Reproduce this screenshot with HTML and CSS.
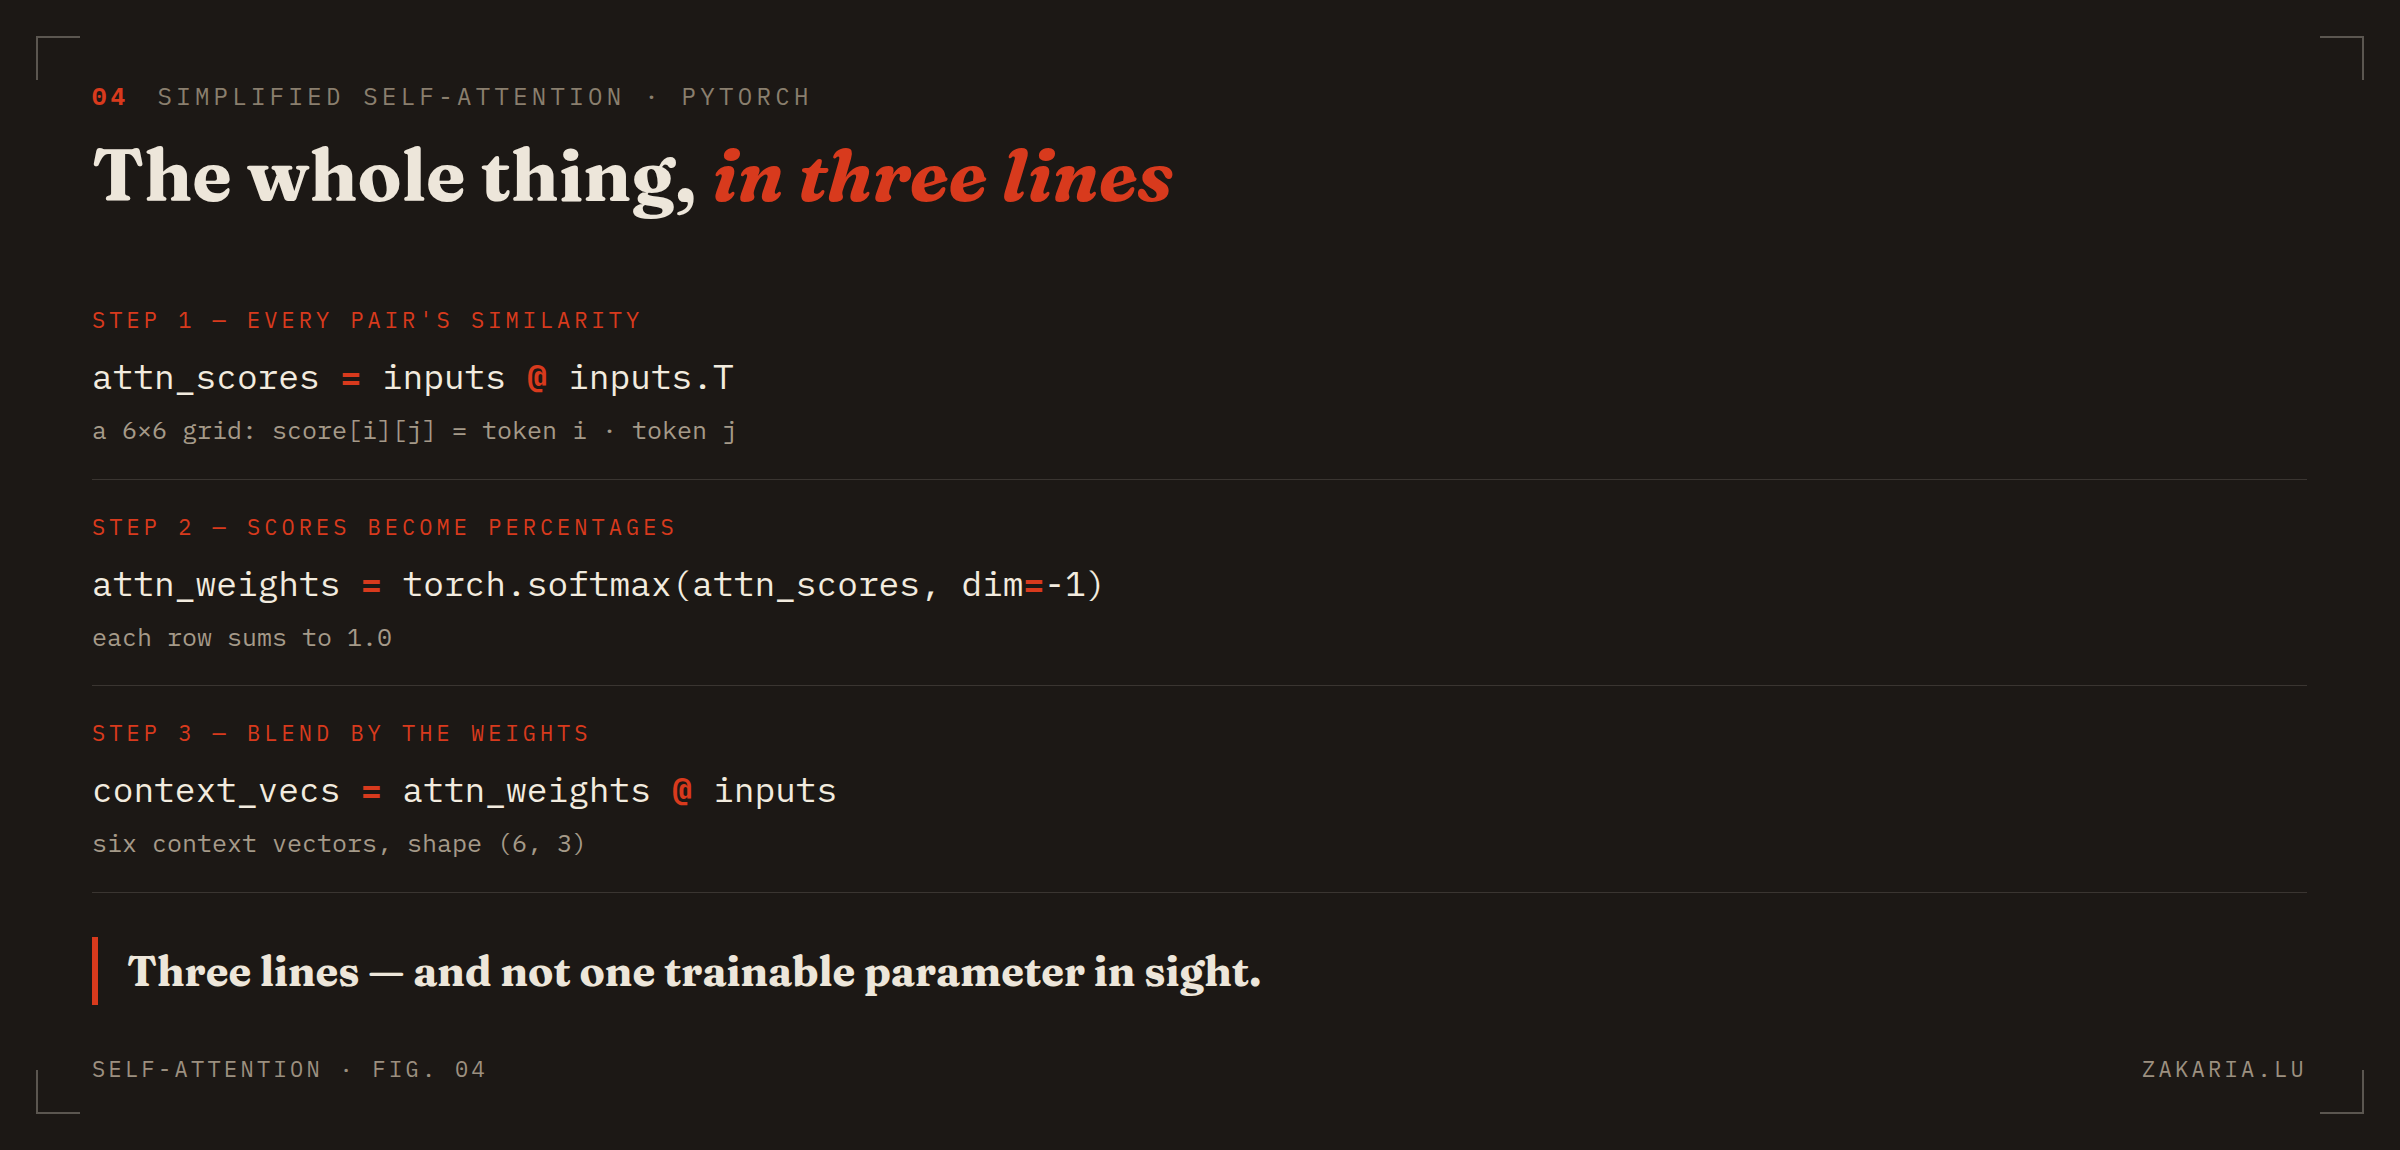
FILE: index.html
```html
<!DOCTYPE html>
<html lang="en">
<head>
<meta charset="utf-8">
<title>Simplified self-attention · PyTorch</title>
<link rel="stylesheet" href="styles.css">
</head>
<body>
<main class="slide">
  <span class="corner corner-tl"></span>
  <span class="corner corner-tr"></span>
  <span class="corner corner-bl"></span>
  <span class="corner corner-br"></span>

  <header class="head">
    <p class="eyebrow"><span class="eyebrow-num">04</span><span class="eyebrow-text">SIMPLIFIED SELF-ATTENTION · PYTORCH</span></p>
    <h1 class="title">The whole thing, <em class="title-accent">in three lines</em></h1>
  </header>

  <section class="steps">
    <div class="step">
      <p class="step-label">STEP 1 — EVERY PAIR'S SIMILARITY</p>
      <p class="code">attn_scores <span class="op">=</span> inputs <span class="op">@</span> inputs.T</p>
      <p class="note">a 6×6 grid: score[i][j] = token i · token j</p>
    </div>
    <div class="step">
      <p class="step-label">STEP 2 — SCORES BECOME PERCENTAGES</p>
      <p class="code">attn_weights <span class="op">=</span> torch.softmax(attn_scores, dim<span class="op">=</span>-1)</p>
      <p class="note">each row sums to 1.0</p>
    </div>
    <div class="step">
      <p class="step-label">STEP 3 — BLEND BY THE WEIGHTS</p>
      <p class="code">context_vecs <span class="op">=</span> attn_weights <span class="op">@</span> inputs</p>
      <p class="note">six context vectors, shape (6, 3)</p>
    </div>
  </section>

  <blockquote class="takeaway">Three lines — and not one trainable parameter in sight.</blockquote>

  <footer class="foot">
    <span>SELF-ATTENTION · FIG. 04</span>
    <span>ZAKARIA.LU</span>
  </footer>
</main>
</body>
</html>
```

FILE: styles.css
```css
* { box-sizing: border-box; }

html, body {
  margin: 0;
  padding: 0;
  background: #1c1815;
}

.slide {
  position: relative;
  width: 2400px;
  height: 1150px;
  padding: 83.5px 93px 0 92px;
  background: #1c1815;
  color: #ede6da;
  display: flex;
  flex-direction: column;
  font-family: "IBM Plex Mono", "DejaVu Sans Mono", monospace;
}

.corner {
  position: absolute;
  width: 44px;
  height: 44px;
  border: 0 solid #5b5650;
}
.corner-tl { top: 36px; left: 36px; border-top-width: 2px; border-left-width: 2px; }
.corner-tr { top: 36px; right: 36px; border-top-width: 2px; border-right-width: 2px; }
.corner-bl { bottom: 36px; left: 36px; border-bottom-width: 2px; border-left-width: 2px; }
.corner-br { bottom: 36px; right: 36px; border-bottom-width: 2px; border-right-width: 2px; }

p { margin: 0; }

.eyebrow {
  display: flex;
  font-size: 24px;
  line-height: 24px;
  letter-spacing: 0.18em;
  color: #8a7f6e;
}
.eyebrow-num {
  color: #d83a1d;
  font-weight: 700;
  margin-right: 28px;
}

.title {
  margin: 31.5px 0 62px;
  font-family: "Fraunces", "Liberation Serif", serif;
  font-weight: 700;
  font-size: 72.2px;
  line-height: 72px;
  color: #ede6da;
}
.title-accent {
  color: #d83a1d;
  font-style: italic;
}

.step {
  padding: 36px 0 36.5px;
  border-bottom: 1px solid #3a3531;
  display: flex;
  flex-direction: column;
}

.step-label {
  font-size: 22px;
  line-height: 22px;
  letter-spacing: 0.183em;
  color: #d83a1d;
}

.code {
  margin-top: 28px;
  font-size: 34.5px;
  line-height: 34.5px;
  color: #f2ebdf;
}
.op {
  color: #d83a1d;
  font-weight: 700;
}

.note {
  margin-top: 23.5px;
  font-size: 25px;
  line-height: 25px;
  color: #a59a89;
}

.takeaway {
  margin: 44.5px 0 0;
  padding: 0 0 0 29px;
  border-left: 6px solid #d83a1d;
  font-family: "Fraunces", "Liberation Serif", serif;
  font-weight: 700;
  font-size: 41.5px;
  line-height: 68px;
  color: #ede6da;
}

.foot {
  margin-top: 53px;
  display: flex;
  justify-content: space-between;
  font-size: 22px;
  line-height: 22px;
  letter-spacing: 0.15em;
  color: #9c9080;
}
```
